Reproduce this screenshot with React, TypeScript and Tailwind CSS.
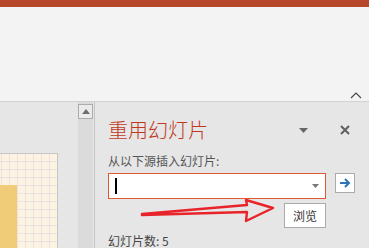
import React from 'react'

const cjk = { fontFamily: '"Noto Sans CJK SC", "Noto Sans", sans-serif' }

function Thumbnail() {
  return (
    <div
      className="absolute left-0 top-[51px] h-[120px] w-[58px] border-r border-t border-[#c6c6c6] bg-[#fdf3e3]"
      style={{
        backgroundImage:
          'linear-gradient(to right, #eedfe0 1px, transparent 1px), linear-gradient(to bottom, #eedfe0 1px, transparent 1px)',
        backgroundSize: '8px 8px',
        backgroundPosition: '1px 7px',
      }}
    >
      <div className="absolute left-0 top-[31px] h-[80px] w-[17px] bg-[#f0cb78]" />
    </div>
  )
}

export default function App() {
  return (
    <div className="relative flex h-[248px] w-[369px] flex-col overflow-hidden bg-[#e6e6e6]" style={cjk}>
      {/* title bar strip */}
      <div className="h-[7px] bg-[#b7472a]" />

      {/* ribbon */}
      <div className="relative h-[95px] border-b border-[#d2d2d2] bg-[#f3f3f3]">
        <svg className="absolute left-[350px] top-[85px]" width="12" height="7" viewBox="0 0 12 7">
          <path d="M1 6 L6 1 L11 6" fill="none" stroke="#444" strokeWidth="1.1" />
        </svg>
      </div>

      <div className="flex flex-1">
        {/* slide list */}
        <div className="relative w-[78px]">
          <Thumbnail />
        </div>

        {/* scrollbar */}
        <div className="flex w-[15px] flex-col bg-[#dbdbdb] pt-[2px]">
          <div className="flex h-[15px] w-[15px] items-center justify-center border border-[#ababab] bg-[#ebebeb]">
            <svg width="8" height="5" viewBox="0 0 8 5">
              <path d="M0 5 L4 0 L8 5 Z" fill="#6d6d6d" />
            </svg>
          </div>
        </div>
        <div className="ml-[1px] w-px bg-[#c6c6c6]" />

        {/* reuse slides pane */}
        <div className="flex flex-1 flex-col pl-[13px] pr-[13px]">
          <div className="mt-[17px] flex h-[22px] items-center">
            <span className="text-[20px] font-light leading-[22px] text-[#bf3a1d]">重用幻灯片</span>
            <svg className="ml-auto mr-[32px]" width="9" height="5" viewBox="0 0 9 5">
              <path d="M0 0 L9 0 L4.5 5 Z" fill="#666" />
            </svg>
            <svg className="mr-[6px]" width="10" height="10" viewBox="0 0 10 10">
              <path d="M1 1 L9 9 M9 1 L1 9" stroke="#5f5f5f" strokeWidth="2" />
            </svg>
          </div>

          <div className="mt-[13px] text-[12px] leading-[14px] text-[#555]">从以下源插入幻灯片:</div>

          <div className="mt-[5px] flex items-start">
            <div className="flex h-[26px] w-[218px] items-center border border-[#e0582f] bg-white pl-[6px] pr-[6px]">
              <div className="h-[16px] w-[2px] bg-black" />
              <svg className="ml-auto" width="7" height="4" viewBox="0 0 7 4">
                <path d="M0 0 L7 0 L3.5 4 Z" fill="#777" />
              </svg>
            </div>
            <div className="ml-[9px] flex h-[20px] w-[20px] items-center justify-center border border-[#ababab] bg-white">
              <svg width="12" height="10" viewBox="0 0 12 10">
                <path d="M1 5 L10 5 M6 1 L10 5 L6 9" fill="none" stroke="#2e75b6" strokeWidth="2" />
              </svg>
            </div>
          </div>

          <div className="mt-[4px] flex w-[218px] justify-end">
            <button className="flex h-[25px] w-[42px] items-center justify-center border border-[#ababab] bg-white text-[12px] text-[#333]">
              浏览
            </button>
          </div>

          <div className="mt-[6px] text-[12px] leading-[14px] text-[#444]">幻灯片数: 5</div>
        </div>
      </div>

      {/* annotation arrow */}
      <svg className="absolute left-0 top-0" width="369" height="248" viewBox="0 0 369 248">
        <path
          d="M142 214 L247 205 L246 200 L273 208 L246 221 L247 212 L142 215 Z"
          fill="none"
          stroke="#e8242a"
          strokeWidth="2.4"
          strokeLinejoin="round"
        />
      </svg>
    </div>
  )
}
